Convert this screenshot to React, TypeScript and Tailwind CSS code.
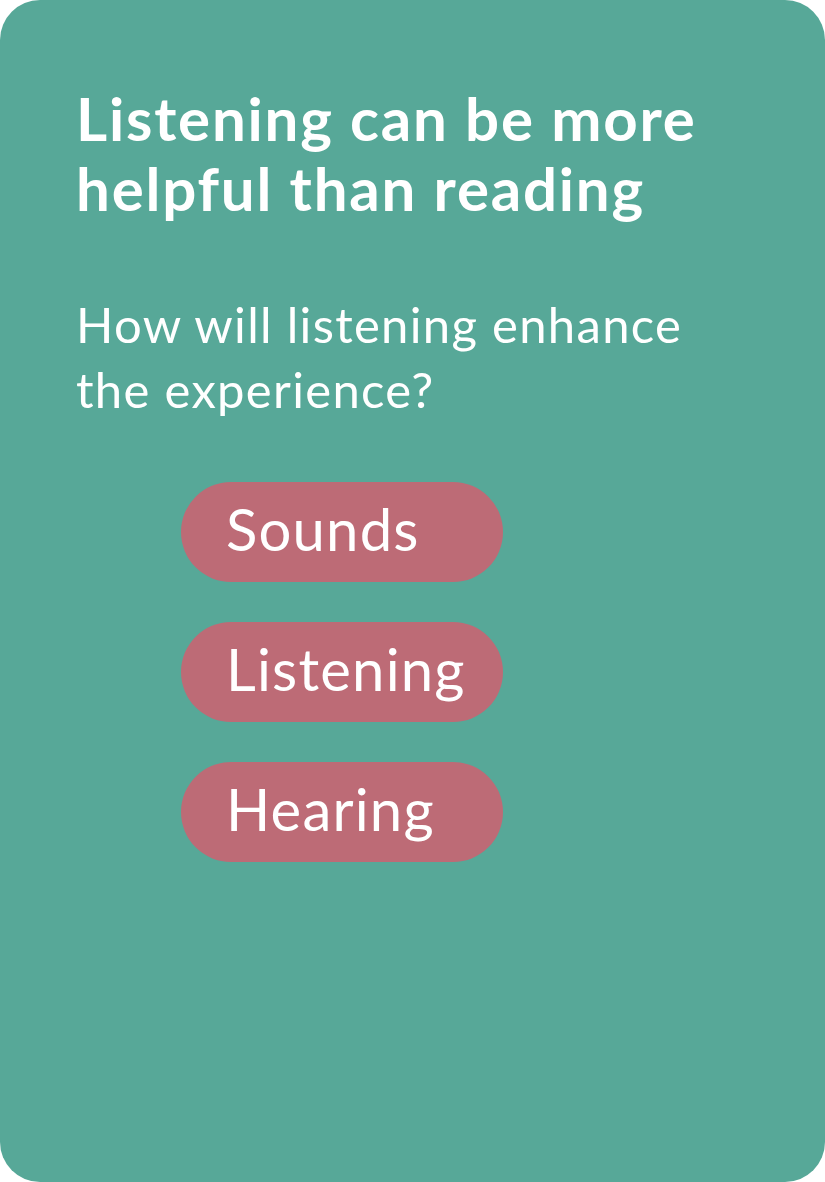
const options = ['Sounds', 'Listening', 'Hearing'];

export default function App() {
  return (
    <div className="w-[825px] h-[1182px] bg-white">
      <div
        className="w-full h-full rounded-[40px] bg-[#57a898] pl-[76px] pt-[83px] text-white"
        style={{ fontFamily: 'Lato, "Noto Sans", sans-serif' }}
      >
        <h1 className="text-[60px] font-bold leading-[70px] tracking-[1.8px]">
          Listening can be more
          <br />
          helpful than reading
        </h1>
        <p className="mt-[69px] text-[49px] leading-[65px] tracking-[1.3px]">
          How will listening enhance
          <br />
          the experience?
        </p>
        <div className="mt-[60px] flex flex-col gap-[40px] pl-[105px]">
          {options.map((o) => (
            <div
              key={o}
              className="w-[322px] h-[100px] rounded-full bg-[#bd6b76] flex items-center pl-[45px] pb-[8px] text-[58px] tracking-[1.2px]"
            >
              {o}
            </div>
          ))}
        </div>
      </div>
    </div>
  );
}
